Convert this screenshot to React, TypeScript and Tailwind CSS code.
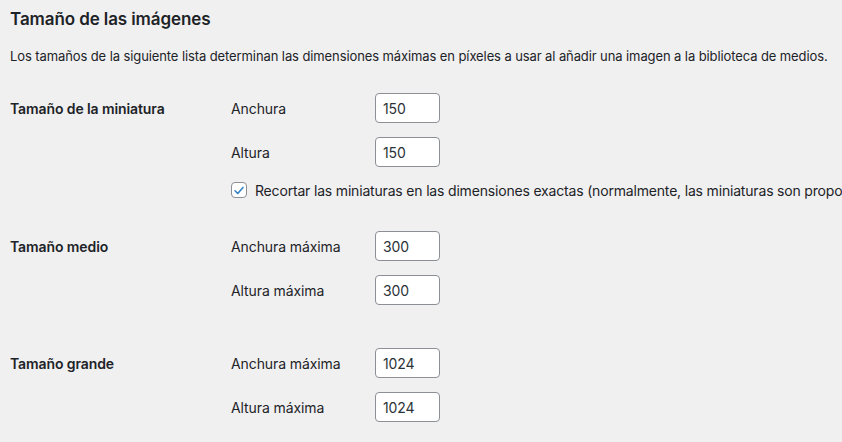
import React from "react";

const font = { fontFamily: "Inter, 'Noto Sans', 'Liberation Sans', sans-serif" };

function Field({ label, value, className = "" }: { label: string; value: string; className?: string }) {
  return (
    <div className={"flex items-center h-[30px] " + className}>
      <span className="w-[144px] text-[14px] text-[#1d2327]">{label}</span>
      <div className="w-[65px] h-[30px] border border-[#8c8f94] rounded-[4px] bg-white flex items-center pl-[7px] text-[14px] text-[#2c3338]">
        {value}
      </div>
    </div>
  );
}

function Section({ title, children, className = "" }: { title: string; children: React.ReactNode; className?: string }) {
  return (
    <div className={"flex " + className}>
      <div className="w-[221px] shrink-0 h-[30px] flex items-center text-[14px] font-semibold text-[#1d2327]">{title}</div>
      <div className="flex flex-col">{children}</div>
    </div>
  );
}

export default function App() {
  return (
    <div className="w-[842px] h-[442px] overflow-hidden bg-[#f0f0f1] px-[10px] tracking-[-0.1px]" style={font}>
      <h2 className="pt-[8px] text-[17px] leading-[22px] font-semibold text-[#1d2327]">Tamaño de las imágenes</h2>
      <p className="mt-[16px] text-[13px] leading-[20px] text-[#1d2327] whitespace-nowrap">
        Los tamaños de la siguiente lista determinan las dimensiones máximas en píxeles a usar al añadir una imagen a la biblioteca de medios.
      </p>
      <Section title="Tamaño de la miniatura" className="mt-[27px]">
        <Field label="Anchura" value="150" />
        <Field label="Altura" value="150" className="mt-[14px]" />
        <div className="mt-[14px] flex items-center h-[18px] whitespace-nowrap">
          <div className="w-[16px] h-[16px] border border-[#8c8f94] rounded-[4px] bg-white flex items-center justify-center shrink-0">
            <svg width="15" height="15" viewBox="0 0 20 20">
              <path d="M4.3 10.4 L8.2 14.3 L15.7 5.6" fill="none" stroke="#3582c4" strokeWidth="2.3" strokeLinecap="round" strokeLinejoin="round" />
            </svg>
          </div>
          <span className="ml-[8px] text-[14px] text-[#1d2327] tracking-[-0.18px]">
            Recortar las miniaturas en las dimensiones exactas (normalmente, las miniaturas son proporcionales)
          </span>
        </div>
      </Section>
      <Section title="Tamaño medio" className="mt-[32px]">
        <Field label="Anchura máxima" value="300" />
        <Field label="Altura máxima" value="300" className="mt-[14px]" />
      </Section>
      <Section title="Tamaño grande" className="mt-[43px]">
        <Field label="Anchura máxima" value="1024" />
        <Field label="Altura máxima" value="1024" className="mt-[14px]" />
      </Section>
    </div>
  );
}
